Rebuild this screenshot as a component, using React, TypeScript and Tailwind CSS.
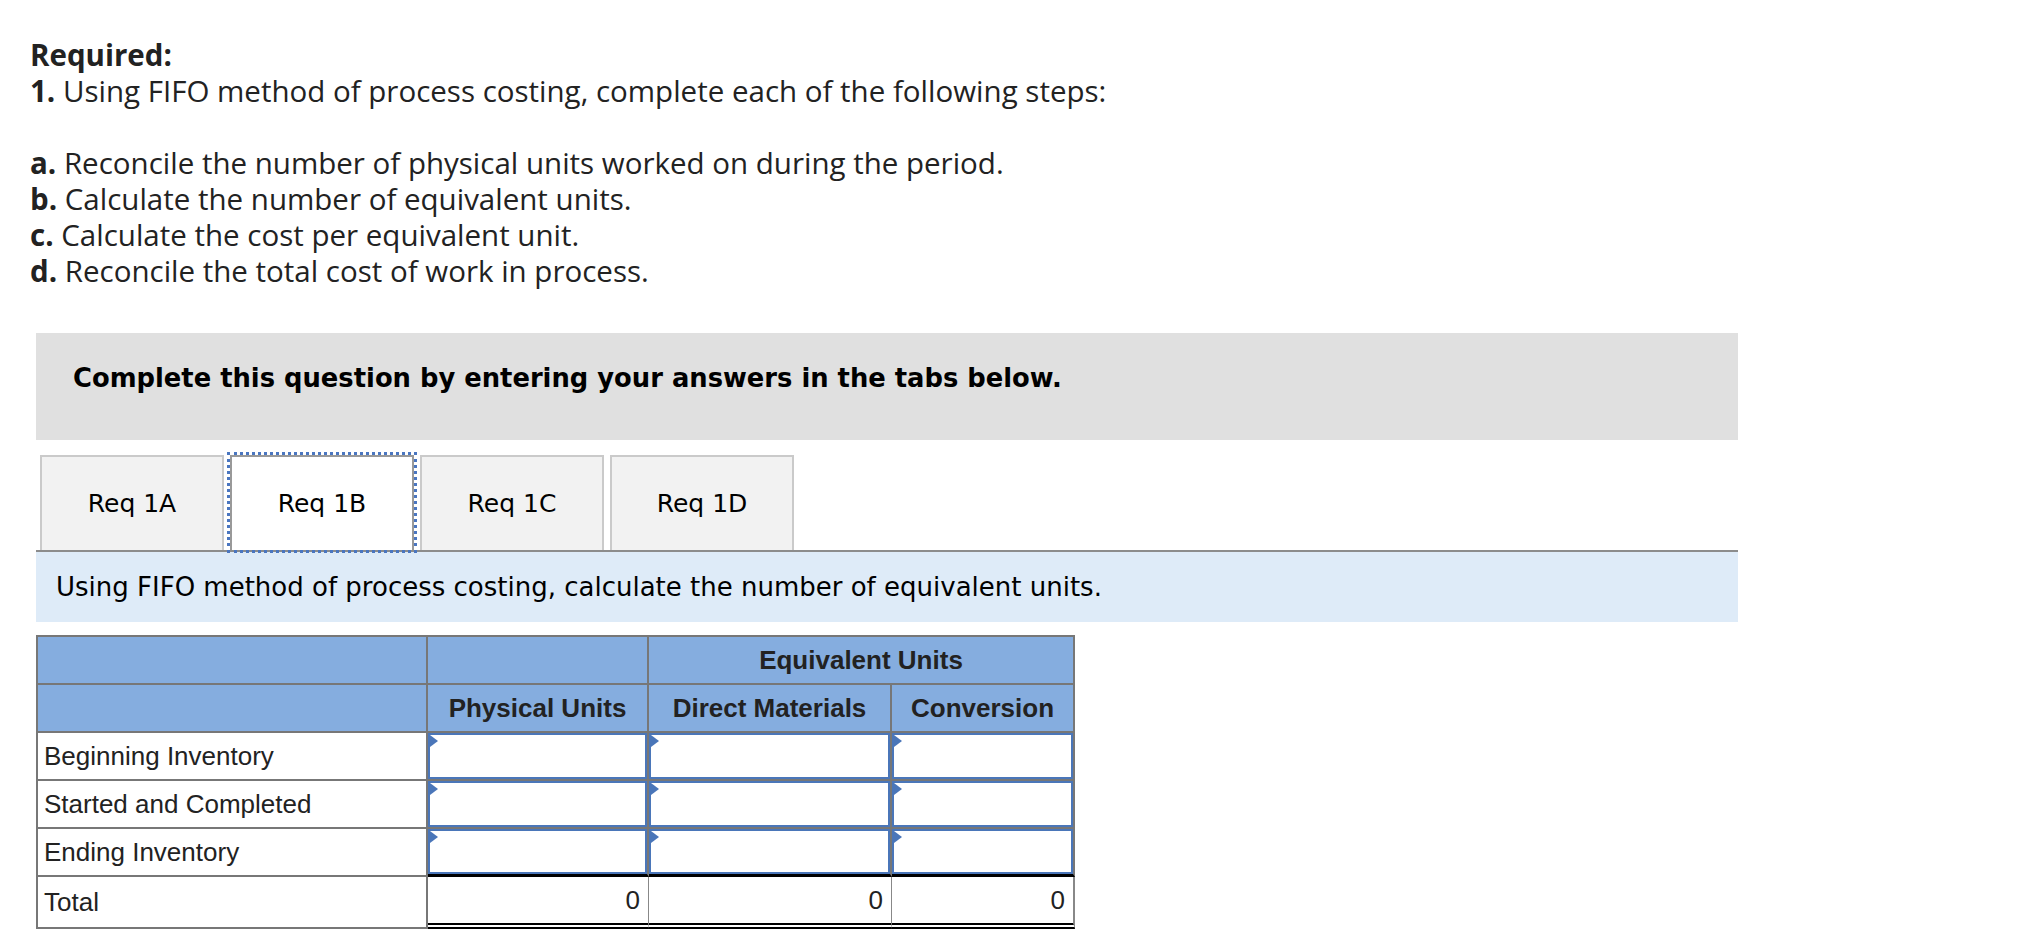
import React from "react";

const tabs = ["Req 1A", "Req 1B", "Req 1C", "Req 1D"];
const rows = ["Beginning Inventory", "Started and Completed", "Ending Inventory"];

function InputCell({ endRow }: { endRow?: boolean }) {
  return (
    <div
      className={
        "relative h-[48px] bg-white border-r-2 border-[#777] " +
        (endRow ? "border-b-[3px] border-b-black" : "border-b-2")
      }
    >
      <div className="relative h-full w-full border-2 border-[#4a76b9] bg-white">
        {/* little marker in the corner */}
        <div className="absolute left-0 top-0 h-0 w-0 border-y-[6px] border-l-[8px] border-y-transparent border-l-[#4a76b9]" />
      </div>
    </div>
  );
}

export default function App() {
  return (
    <div className="min-h-[942px] w-full bg-white text-[#222]">
      {/* Instructions */}
      <div className="pl-[30px] pt-[37px] font-['Open_Sans',sans-serif] text-[29.5px] leading-[36px]">
        <p className="font-bold">Required:</p>
        <p>
          <b>1.</b> Using FIFO method of process costing, complete each of the following steps:
        </p>
        <p className="h-[36px]" />
        <p>
          <b>a.</b> Reconcile the number of physical units worked on during the period.
        </p>
        <p>
          <b>b.</b> Calculate the number of equivalent units.
        </p>
        <p>
          <b>c.</b> Calculate the cost per equivalent unit.
        </p>
        <p>
          <b>d.</b> Reconcile the total cost of work in process.
        </p>
      </div>

      <div className="ml-[36px] mt-[44px] w-[1702px]">
        <div className="h-[107px] bg-[#e0e0e0] pl-[37px] pt-[29px] font-['DejaVu_Sans',Verdana,sans-serif] text-[25.8px] font-bold leading-[32px] text-black">
          Complete this question by entering your answers in the tabs below.
        </div>

        {/* Tabs */}
        <div className="mt-[15px] flex gap-[6px] border-b-2 border-[#8c8c8c] pl-[4px] font-['DejaVu_Sans',Verdana,sans-serif] text-[25px] text-black">
          {tabs.map((t) => {
            const active = t === "Req 1B";
            return (
              <div
                key={t}
                className={
                  "flex h-[95px] w-[184px] items-center justify-center border-2 border-b-0 " +
                  (active
                    ? "border-[#999] bg-white outline-[3px] outline-dotted outline-[#4a76c0]"
                    : "border-[#cacaca] bg-[#f2f2f2]")
                }
              >
                {t}
              </div>
            );
          })}
        </div>

        <div className="flex h-[70px] items-center bg-[#deebf8] pl-[20px] font-['DejaVu_Sans',Verdana,sans-serif] text-[26px] text-black">
          Using FIFO method of process costing, calculate the number of equivalent units.
        </div>

        {/* Table */}
        <div className="mt-[13px] grid w-[1039px] grid-cols-[390px_221px_243px_183px] border-l-2 border-t-2 border-[#777] font-['Liberation_Sans',Arial,sans-serif] text-[26px] text-[#222]">
          <div className="h-[48px] border-b-2 border-r-2 border-[#777] bg-[#85addf]" />
          <div className="h-[48px] border-b-2 border-r-2 border-[#777] bg-[#85addf]" />
          <div className="col-span-2 flex h-[48px] items-center justify-center border-b-2 border-r-2 border-[#777] bg-[#85addf] font-bold">
            Equivalent Units
          </div>

          <div className="h-[48px] border-b-2 border-r-2 border-[#777] bg-[#85addf]" />
          <div className="flex h-[48px] items-center justify-center border-b-2 border-r-2 border-[#777] bg-[#85addf] font-bold">
            Physical Units
          </div>
          <div className="flex h-[48px] items-center justify-center border-b-2 border-r-2 border-[#777] bg-[#85addf] font-bold">
            Direct Materials
          </div>
          <div className="flex h-[48px] items-center justify-center border-b-2 border-r-2 border-[#777] bg-[#85addf] font-bold">
            Conversion
          </div>

          {rows.map((r, i) => (
            <React.Fragment key={r}>
              <div className="flex h-[48px] items-center border-b-2 border-r-2 border-[#777] pl-[6px]">{r}</div>
              <InputCell endRow={i === 2} />
              <InputCell endRow={i === 2} />
              <InputCell endRow={i === 2} />
            </React.Fragment>
          ))}

          <div className="flex h-[52px] items-center border-b-2 border-r-2 border-[#777] pl-[6px]">Total</div>
          <div className="flex h-[52px] items-center justify-end border-r border-b-[6px] border-r-[#888] border-b-black pr-[8px] [border-bottom-style:double]">
            0
          </div>
          <div className="flex h-[52px] items-center justify-end border-r border-b-[6px] border-r-[#888] border-b-black pr-[8px] [border-bottom-style:double]">
            0
          </div>
          <div className="flex h-[52px] items-center justify-end border-r-2 border-b-[6px] border-r-[#888] border-b-black pr-[8px] [border-bottom-style:double]">
            0
          </div>
        </div>
      </div>
    </div>
  );
}
